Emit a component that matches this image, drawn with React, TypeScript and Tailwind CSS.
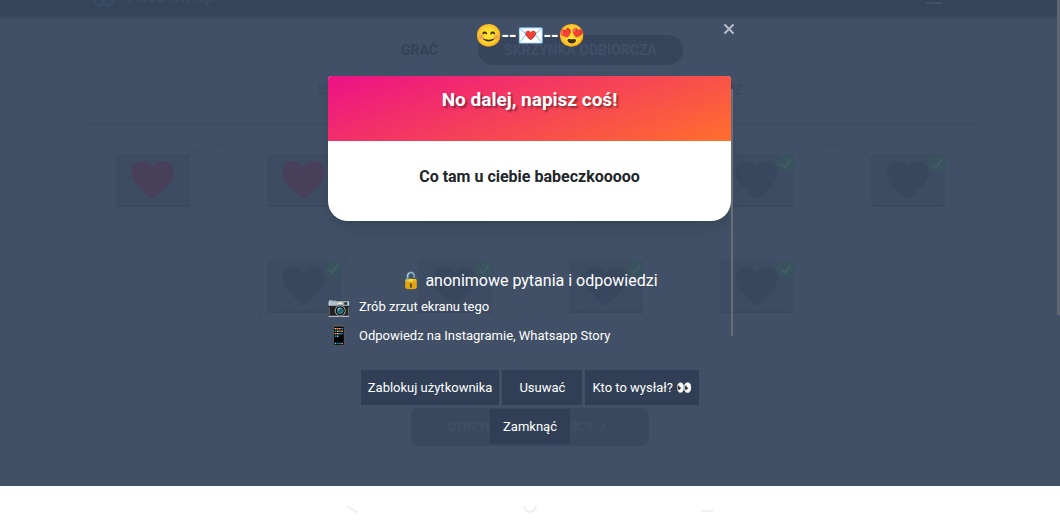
import { X, ChevronRight } from "lucide-react";

type Letter = { id: number; unread: boolean; link: "above" | "below" | "none" };

const letters: Letter[] = Array.from({ length: 10 }, (_, i) => ({
  id: i + 1,
  unread: i < 2,
  link: i === 5 || i === 9 ? "none" : i % 2 === 0 ? "above" : "below",
}));

function Envelope({ unread, link }: { unread: boolean; link: Letter["link"] }) {
  return (
    <svg viewBox="0 0 151 106" className="h-[106px] w-[151px] overflow-visible" fill="none" aria-hidden="true">
      <rect x="31" y="17" width="88" height="76" rx="14" stroke="#3f4e64" />
      <rect x="39" y="26" width="74" height="53" rx="3" fill="#3e4c63" />
      <path d="M40 28l34 27 38-27M40 77l24-24M112 77L88 53" stroke="#3c4a61" />
      <path d="M40 78h72" stroke="#3a485f" strokeWidth="2" />
      {link === "above" && <path d="M104 32C124 12 168 12 190 28" stroke="#3d4b62" strokeDasharray="4 3" />}
      {link === "below" && <path d="M104 76C124 92 168 92 190 78" stroke="#3d4b62" strokeDasharray="4 3" />}
      <path
        d="M75.500 71C63 61 54.500 54 54.500 44c0-7 4.500-11 10-11 5 0 9 3 11 6 2-3 6-6 11-6 5.500 0 10 4 10 11 0 10-8.500 17-21 27z"
        fill={unread ? "#483f5b" : "#38465e"}
      />
      {!unread && (
        <>
          <circle cx="105" cy="35" r="10" fill="#3a525f" />
          <path d="M101 36l3 3 6-8" stroke="#435c66" strokeWidth="2" />
        </>
      )}
    </svg>
  );
}

function Page() {
  return (
    <div className="flex flex-col items-center">
      <header className="flex h-4 w-full items-end justify-between overflow-hidden bg-[#36445a] px-[92px] shadow-sm">
        <a href="#home" className="flex items-end gap-3 text-[22px] leading-5 font-bold text-[#3b4b61]">
          <svg viewBox="0 0 24 16" className="mb-2 h-4 w-6" fill="none" stroke="#354d65" strokeWidth="3" aria-hidden="true">
            <circle cx="7" cy="8" r="5" />
            <circle cx="16" cy="8" r="5" />
          </svg>
          <span className="pb-[11px]">Anonimp</span>
        </a>
        <button aria-label="Menu" className="mr-[26px] mb-3 h-1 w-4 border-b-2 border-[#435167]" />
      </header>
      <nav className="mt-[19px] flex h-[30px] items-center gap-4 text-sm font-bold">
        <a href="#play" className="px-6 text-[#344259]">GRAĆ</a>
        <a href="#inbox" className="flex h-[30px] items-center rounded-full bg-[#36455b] px-[26px] text-[#414f67]">
          SKRZYNKA ODBIORCZA
        </a>
      </nav>
      <h1 className="mt-[15px] text-sm leading-5 font-bold text-[#3c4a60]">
        UŻYTKOWNICY WYSŁALI ANONIMOWE WIADOMOŚCI, ODPOWIEDZ
      </h1>
      <hr className="mt-[23px] w-full max-w-[894px] border-[#3d4b62]" />
      <ul className="mt-1 flex max-w-[906px] flex-wrap justify-center">
        {letters.map((l) => (
          <li key={l.id}>
            <Envelope unread={l.unread} link={l.link} />
          </li>
        ))}
      </ul>
      <button className="mt-[68px] flex h-[38px] w-[238px] items-center justify-center rounded-lg bg-[#3a485f] text-xs font-bold text-[#414f66]">
        OTRZYMUJ WIADOMOŚCI! <ChevronRight size={20} />
      </button>
    </div>
  );
}

function Action({ children }: { children: React.ReactNode }) {
  return <button className="h-[35px] min-w-20 bg-[#303f55] px-[7px] pt-px">{children}</button>;
}

function Dialog() {
  return (
    <div role="dialog" aria-label="Wiadomość" className="absolute inset-0 flex justify-center font-[Roboto,sans-serif] text-white">
      <div className="flex w-full max-w-[406px] flex-col">
        <div className="relative mt-5 text-center text-[22px] leading-8 font-medium">
          😊--💌--😍
          <button aria-label="Zamknij" className="absolute top-[1px] -right-1 text-[#b5bcc6]">
            <X size={16} strokeWidth={3} />
          </button>
        </div>
        <div className="mt-6 flex h-[268px]">
          <div className="ml-[1px] flex-1">
            <article className="overflow-hidden rounded-t-sm rounded-b-[20px] bg-white text-center font-bold shadow-lg">
              <h2 className="h-[65px] bg-linear-[160deg] from-[#ec1187] to-[#ff6f2c] pt-3 text-[19px] leading-6 [text-shadow:2px_2px_2px_#00000066]">
                No dalej, napisz coś!
              </h2>
              <p className="h-20 pt-6 text-base leading-6 text-[#212529]">Co tam u ciebie babeczkooooo</p>
            </article>
            <h3 className="mt-12 text-center text-base leading-6">🔓 anonimowe pytania i odpowiedzi</h3>
            <ul className="-mt-px text-[13px]">
              <li className="flex h-[29px] items-center">
                <span className="-ml-px w-8 text-[19px] leading-6">📷</span>Zrób zrzut ekranu tego
              </li>
              <li className="flex h-[29px] items-center">
                <span className="-ml-px w-8 text-[19px] leading-6">📱</span>Odpowiedz na Instagramie, Whatsapp Story
              </li>
            </ul>
          </div>
          <div className="mt-[13px] mb-2 w-[2px] bg-[#696d75]" />
        </div>
        <div className="mt-[26px] flex flex-wrap justify-center gap-x-[3px] gap-y-1 text-[13px]">
          <Action>Zablokuj użytkownika</Action>
          <Action>Usuwać</Action>
          <Action>Kto to wysłał? 👀</Action>
          <Action>Zamknąć</Action>
        </div>
      </div>
    </div>
  );
}

export default function App() {
  return (
    <div className="flex min-h-screen flex-col bg-white font-[Roboto,sans-serif]">
      <main className="relative flex-1 bg-[#415066]">
        <Page />
        <Dialog />
        <div className="absolute top-0 right-0 h-[315px] w-[3px] bg-[#5f6671]" />
      </main>
      <footer className="grid h-[38px] grid-cols-3 justify-items-center px-[265px] pt-4">
        <svg viewBox="0 0 14 14" className="h-3.5 w-3.5" fill="none" stroke="#f0f0f0" strokeWidth="2" aria-hidden="true">
          <path d="M1 4l11 7" />
        </svg>
        <svg viewBox="0 0 14 14" className="h-3.5 w-3.5" fill="none" stroke="#f0f0f0" strokeWidth="2" aria-hidden="true">
          <path d="M1 4a6 6 0 0 0 12 0" />
        </svg>
        <svg viewBox="0 0 14 14" className="h-3.5 w-3.5" fill="none" stroke="#f0f0f0" strokeWidth="2" aria-hidden="true">
          <path d="M1 9h12" />
        </svg>
      </footer>
    </div>
  );
}
